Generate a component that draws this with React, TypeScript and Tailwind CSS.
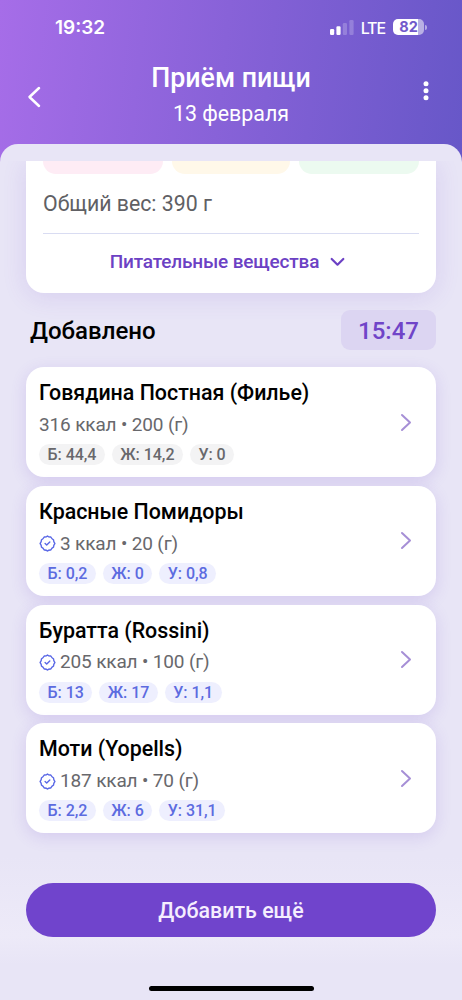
type Item = {
  name: string;
  info: string;
  verified: boolean;
  macros: string[];
};

const items: Item[] = [
  { name: "Говядина Постная (Филье)", info: "316 ккал • 200 (г)", verified: false, macros: ["Б: 44,4", "Ж: 14,2", "У: 0"] },
  { name: "Красные Помидоры", info: "3 ккал • 20 (г)", verified: true, macros: ["Б: 0,2", "Ж: 0", "У: 0,8"] },
  { name: "Буратта (Rossini)", info: "205 ккал • 100 (г)", verified: true, macros: ["Б: 13", "Ж: 17", "У: 1,1"] },
  { name: "Моти (Yopells)", info: "187 ккал • 70 (г)", verified: true, macros: ["Б: 2,2", "Ж: 6", "У: 31,1"] },
];

function StatusBar() {
  return (
    <div className="flex h-[54px] items-end justify-between pl-[55px] pr-[35px] text-white">
      <span className="h-[54px] font-['Inter'] text-[19px] font-semibold leading-[56px]">19:32</span>
      <div className="flex h-[54px] items-center">
        <svg width="24" height="15" viewBox="0 0 24 15" fill="currentColor">
          <rect x="0" y="9" width="4.2" height="6" rx="1.2" />
          <rect x="6.4" y="6.3" width="4.2" height="8.7" rx="1.2" />
          <rect x="12.8" y="3" width="4.2" height="12" rx="1.2" opacity="0.22" />
          <rect x="19.4" y="0" width="4.2" height="15" rx="1.2" opacity="0.22" />
        </svg>
        <span className="ml-[7px] mt-[2px] font-['Inter'] text-[16px] font-medium leading-none tracking-[-1.1px]">LTE</span>
        <div className="ml-[8px] flex h-[16px] w-[31px] items-center justify-center rounded-[5px] bg-[linear-gradient(90deg,#fff_82%,#b9b0e4_82%)] font-['Inter'] text-[14.5px] font-bold leading-none text-[#7259cb]">
          82
        </div>
        <div className="ml-px h-[5px] w-[2px] rounded-r-full bg-white/50" />
      </div>
    </div>
  );
}

function Header() {
  return (
    <div className="flex h-[90px] justify-between text-white">
      <svg className="ml-[27px] mt-[32px]" width="14" height="22" viewBox="0 0 14 22" fill="none" stroke="currentColor" strokeWidth="2.5" strokeLinecap="round" strokeLinejoin="round">
        <path d="M12 2 L2.5 11 L12 20" />
      </svg>
      <div className="pr-[2px] pt-[6px] text-center">
        <h1 className="text-[26.8px] font-medium leading-[36px]">Приём пищи</h1>
        <p className="text-[21.4px] leading-[36px]">13 февраля</p>
      </div>
      <svg className="mr-[33px] mt-[27px]" width="6" height="20" viewBox="0 0 6 20" fill="currentColor">
        <circle cx="3" cy="2.8" r="2.5" />
        <circle cx="3" cy="9.8" r="2.5" />
        <circle cx="3" cy="16.8" r="2.5" />
      </svg>
    </div>
  );
}

function VerifiedIcon() {
  return (
    <svg className="mr-[4px] shrink-0" width="17" height="17" viewBox="0 0 17 17" fill="none" stroke="#5a68e6" strokeWidth="1.4" strokeLinecap="round" strokeLinejoin="round">
      <path d="M8.5 1 Q9.8 2.2 11.8 2 Q12.7 3.8 14.5 4.8 Q14.5 6.9 15.9 8.5 Q14.5 10.1 14.5 12.2 Q12.7 13.2 11.8 15 Q9.8 14.8 8.5 16 Q7.2 14.8 5.2 15 Q4.3 13.2 2.5 12.2 Q2.5 10.1 1.1 8.5 Q2.5 6.9 2.5 4.8 Q4.3 3.8 5.2 2 Q7.2 2.2 8.5 1Z" />
      <path d="M6.1 8.6 L7.7 10.1 L10.8 7.1" />
    </svg>
  );
}

function ItemCard({ item }: { item: Item }) {
  return (
    <div className="flex h-[110px] items-center justify-between rounded-[18px] bg-white pl-[13px] pr-[24px] shadow-[0_4px_16px_rgba(112,68,204,0.16)]">
      <div className="h-full pt-[11px]">
        <h3 className="text-[21.4px] font-medium leading-[30px] text-black">{item.name}</h3>
        <p className="mt-[3px] flex h-[28px] items-center text-[19px] tracking-[-0.15px] text-[#68686c]">
          {item.verified && <VerifiedIcon />}
          {item.info}
        </p>
        <div className="mt-[5px] flex gap-[7px]">
          {item.macros.map((macro) => (
            <span
              key={macro}
              className={`flex h-[21px] items-center rounded-full px-[8.5px] pt-[0.8px] text-[16px] font-medium tracking-[-0.04px] ${
                item.verified ? "bg-[#eeeffe] text-[#5c6be0]" : "bg-[#f3f3f4] text-[#68686c]"
              }`}
            >
              {macro}
            </span>
          ))}
        </div>
      </div>
      <svg width="12" height="19" viewBox="0 0 12 19" fill="none" stroke="#a68fd6" strokeWidth="2" strokeLinecap="round" strokeLinejoin="round">
        <path d="M2 2 L10 9.5 L2 17" />
      </svg>
    </div>
  );
}

export default function App() {
  return (
    <div className="h-[1000px] w-[462px] overflow-hidden bg-[linear-gradient(96deg,#a66de8_0%,#8862d8_48%,#6757c8_100%)] bg-[length:462px_165px] font-['Roboto',sans-serif]">
      <StatusBar />
      <Header />

      <div className="flex h-[856px] flex-col rounded-t-[18px] bg-[#e8e5f6] pt-[17px]">
        <div className="h-[696px] overflow-hidden px-[26px]">
          <section className="h-[132px] rounded-b-[18px] bg-white px-[17px] shadow-[0_4px_24px_rgba(112,68,204,0.14)]">
            <div className="flex gap-[9px]">
              <div className="h-[13px] w-[120px] rounded-b-[13px] bg-[#feecf5]" />
              <div className="h-[13px] flex-1 rounded-b-[13px] bg-[#fff8e9]" />
              <div className="h-[13px] w-[120px] rounded-b-[13px] bg-[#ecfaf0]" />
            </div>
            <p className="mt-[14px] text-[21.3px] leading-[32px] text-[#606064]">Общий вес: 390 г</p>
            <div className="mt-[13px] h-px bg-[#d9dcf2]" />
            <div className="mt-[12px] flex items-center justify-center pr-[7px] text-[19px] font-medium leading-[32px] tracking-[-0.18px] text-[#6c41c4]">
              Питательные вещества
              <svg className="ml-[11px]" width="15" height="10" viewBox="0 0 15 10" fill="none" stroke="currentColor" strokeWidth="2.2" strokeLinecap="round" strokeLinejoin="round">
                <path d="M1.7 2 L7.5 7.7 L13.3 2" />
              </svg>
            </div>
          </section>

          <div className="mt-[17px] flex h-[40px] items-center justify-between pl-[4px]">
            <h2 className="pt-[2px] text-[24px] font-medium text-black">Добавлено</h2>
            <div className="flex h-[40px] w-[95px] items-center justify-center rounded-[9px] bg-[#dcd5f2] pt-[2px] text-[24px] font-medium text-[#7044c8]">
              15:47
            </div>
          </div>

          <div className="mt-[17px] flex flex-col gap-[8.8px]">
            {items.map((item) => (
              <ItemCard key={item.name} item={item} />
            ))}
          </div>
        </div>

        <div className="flex h-[143px] flex-col items-center bg-[linear-gradient(180deg,#e8e5f6_0%,#edeaf8_55%,#e8e5f6_75%)] px-[26px] pt-[26px]">
          <button className="h-[54px] w-full rounded-full bg-[#7044cc] pt-[2px] text-[21.4px] font-medium text-[#f5eefe]">Добавить ещё</button>
          <div className="mt-[49px] h-[5px] w-[165px] shrink-0 rounded-full bg-black" />
        </div>
      </div>
    </div>
  );
}
